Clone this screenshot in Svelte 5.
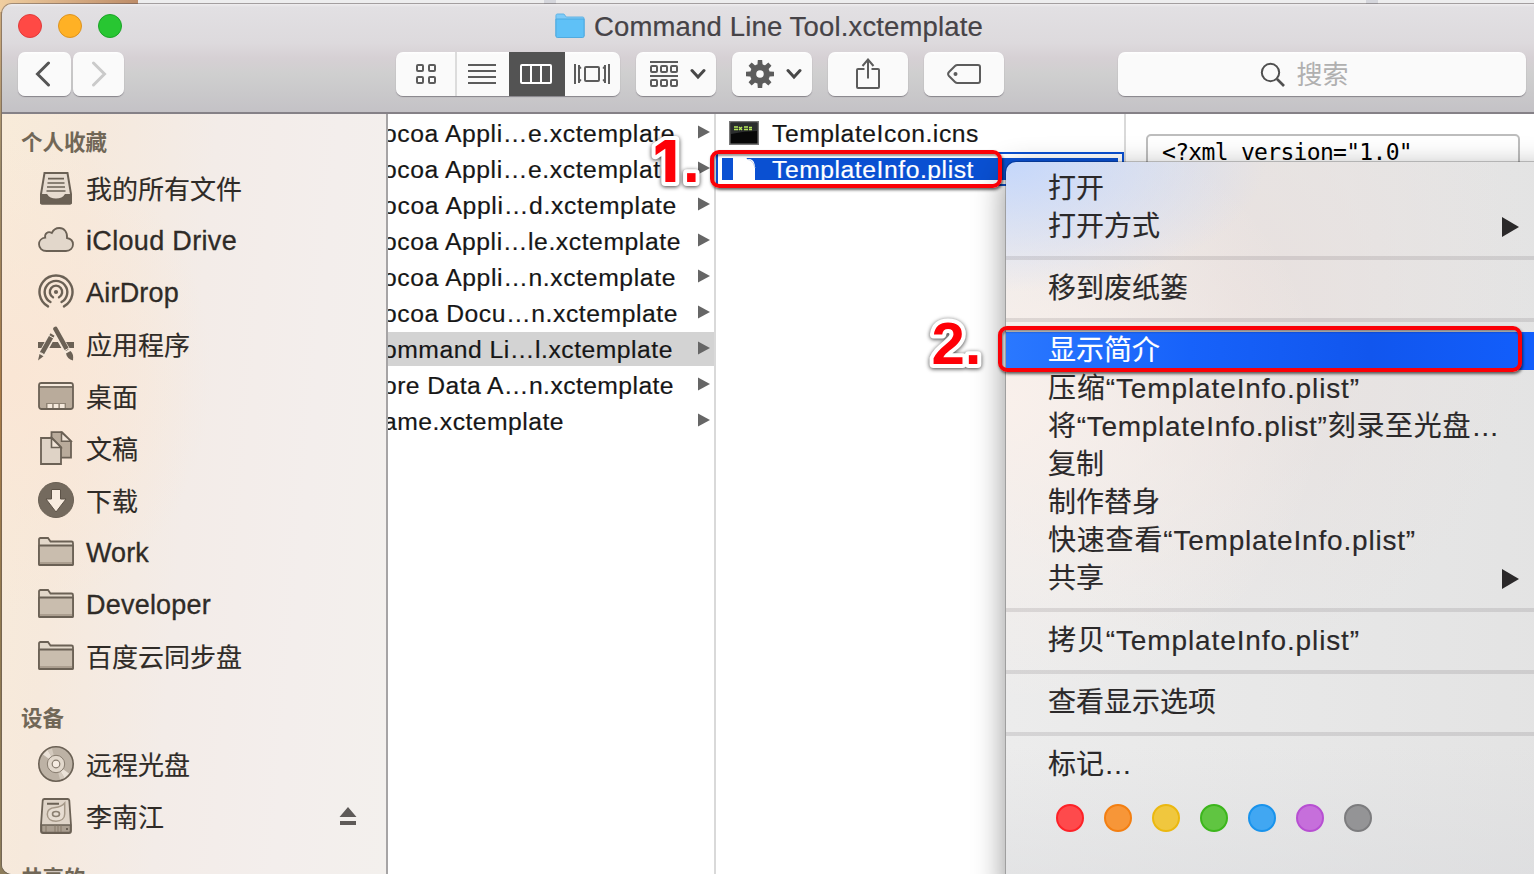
<script>
  const favorites = [
    { icon: 'tray', label: '我的所有文件', width: 156 },
    { icon: 'cloud', label: 'iCloud Drive', width: 151, latin: true },
    { icon: 'airdrop', label: 'AirDrop', width: 93, latin: true },
    { icon: 'apps', label: '应用程序', width: 104 },
    { icon: 'desktop', label: '桌面', width: 52 },
    { icon: 'documents', label: '文稿', width: 52 },
    { icon: 'download', label: '下载', width: 52 },
    { icon: 'folder', label: 'Work', width: 63, latin: true },
    { icon: 'folder', label: 'Developer', width: 125, latin: true },
    { icon: 'folder', label: '百度云同步盘', width: 156 }
  ];
  const devices = [
    { icon: 'disc', label: '远程光盘', width: 104 },
    { icon: 'drive', label: '李南江', width: 78, eject: true }
  ];
  const sections = [
    { title: '个人收藏', items: favorites },
    { title: '设备', items: devices },
    { title: '共享的', items: [] }
  ];

  const templates = [
    { label: 'ocoa Appli…e.xctemplate', width: 292 },
    { label: 'ocoa Appli…e.xctemplate', width: 292 },
    { label: 'ocoa Appli…d.xctemplate', width: 294 },
    { label: 'ocoa Appli…le.xctemplate', width: 298 },
    { label: 'ocoa Appli…n.xctemplate', width: 293 },
    { label: 'ocoa Docu…n.xctemplate', width: 295 },
    { label: 'ommand Li…l.xctemplate', width: 290, selected: true },
    { label: 'ore Data A…n.xctemplate', width: 291 },
    { label: 'ame.xctemplate', width: 181 }
  ];

  const menu = [
    { label: '打开', width: 56 },
    { label: '打开方式', width: 112, submenu: true },
    { separator: true },
    { label: '移到废纸篓', width: 140 },
    { separator: true },
    { label: '显示简介', width: 112, active: true },
    { label: '压缩“TemplateInfo.plist”', width: 312 },
    { label: '将“TemplateInfo.plist”刻录至光盘…', width: 452 },
    { label: '复制', width: 56 },
    { label: '制作替身', width: 112 },
    { label: '快速查看“TemplateInfo.plist”', width: 368 },
    { label: '共享', width: 56, submenu: true },
    { separator: true },
    { label: '拷贝“TemplateInfo.plist”', width: 312 },
    { separator: true },
    { label: '查看显示选项', width: 168 },
    { separator: true },
    { label: '标记…', width: 84 }
  ];

  const tags = [
    ['#fe4a4c', '#fd2228'],
    ['#f79638', '#f37f12'],
    ['#f0c73e', '#ebb810'],
    ['#60c541', '#3cb61c'],
    ['#41a7f2', '#1993ec'],
    ['#c66fdb', '#b74fd2'],
    ['#949496', '#7c7c7e']
  ];

  // Tracks a label out or in until it fills its nominal width.
  function track(node, width) {
    const natural = node.getBoundingClientRect().width;
    const count = [...node.textContent].length;
    node.style.letterSpacing = `${(width - natural) / count}px`;
  }
</script>

{#snippet icon(name)}
  <svg class="icon" viewBox="0 0 36 36" width="36" height="36" fill="none" stroke="#6b6155" stroke-width="2">
    {#if name === 'tray'}
      <path d="M6.500 3h23l3.500 21v8.500q0 1-1 1H4q-1 0-1-1V24z" fill="#e7dcd0" />
      <path d="M3 25h5.500q2.500 4.500 9.500 4.500t9.500-4.500H33v7.500q0 1-1 1H4q-1 0-1-1z" fill="#6b6155" />
      <path d="M10 8.700h16M9.500 13h17M9 17h18M8.500 21h19" stroke-width="1.700" />
    {:else if name === 'cloud'}
      <path d="M8.500 29C4 29 1 26 1 22.300c0-3.500 2.500-6.300 6.200-6.600C6.300 11.500 10 8.800 13.800 11 15.500 7.500 18.300 6 21.300 6c4.800 0 8.300 4 7.700 10 3.600.6 6 3.200 6 6.500 0 3.700-3 6.500-7 6.500z" fill="#e2d7cb" stroke-width="1.800" />
    {:else if name === 'airdrop'}
      <g stroke-width="2.400" stroke-linecap="round">
        <path d="M10 32.400a16.500 16.500 0 1 1 16 0" />
        <path d="M12.500 28a11.300 11.300 0 1 1 11 0" />
        <path d="M15 23.300a6.200 6.200 0 1 1 6 0" />
      </g>
      <circle cx="18" cy="18" r="2.100" fill="#6b6155" stroke="none" />
    {:else if name === 'apps'}
      <path d="M0 19h36" stroke-width="6" />
      <path d="M14.500 9 3.500 29M17 4l14.500 25" stroke="#f6e9db" stroke-width="7" />
      <path d="M14.500 8.500 3.800 27.500" stroke-width="4.600" />
      <path d="M17.500 3 28.300 22.300" stroke-width="4.600" stroke-linecap="round" />
      <path d="m1.500 28 4 2.300L0 34.500z" fill="#6b6155" stroke="none" />
      <path d="m28 27.500 4.500-2.500q3.500 3 2.500 9.500-6-1.500-7-7z" fill="#6b6155" stroke="none" />
      <path d="m11 9.500 5.500 3.200M2.500 26.500l4.500 2.700M26 25l5-3" stroke="#f6e9db" stroke-width="1" />
    {:else if name === 'desktop'}
      <rect x="1" y="5" width="34" height="26" rx="2.500" fill="#b9ab9b" stroke-width="1.800" />
      <path d="M2 8V7q0-1 1.500-1h29Q34 6 34 7v1z" fill="#f5e9dc" stroke="none" />
      <path d="M1 9h34" stroke-width="1.600" />
      <path d="M8 25h20v5H8z" fill="#8f8374" stroke="none" />
      <path d="M9.500 26h4.700v4H9.500zm6.200 0h4.700v4h-4.700zm6.200 0h4.700v4h-4.700z" fill="#f5e9dc" stroke="none" />
    {:else if name === 'documents'}
      <path d="M13.500 2.200H24l9 9v16.500H13.500z" fill="#b9ab9b" stroke-width="1.800" />
      <path d="M23.500 2.500v8.700H33z" fill="#f1e4d7" stroke-width="1.500" />
      <path d="M3 8h11l9 9v17H3z" fill="#dfd3c6" stroke-width="1.800" />
      <path d="M13.500 8v9.500H23z" fill="#f1e4d7" stroke-width="1.600" />
    {:else if name === 'download'}
      <circle cx="18" cy="18" r="17.500" fill="#746a5e" stroke-width="1" />
      <path d="M13.500 7.500h9V17h5.500L18 30 8 17h5.500z" fill="#f8ece0" stroke="#5c5247" stroke-width="1" />
    {:else if name === 'folder'}
      <path d="M1 30V5.500Q1 4 2.500 4H10l2.500 3.500h21q1.500 0 1.500 1.500v21q0 1-1 1H2q-1 0-1-1z" fill="#e3d8ca" stroke-width="1.800" />
      <path d="M1 12.500q0-1 1-1h32q1 0 1 1V30q0 1-1 1H2q-1 0-1-1z" fill="#c9bdae" stroke-width="1.800" />
      <path d="M2 29h32" stroke="#ab9e8f" />
    {:else if name === 'disc'}
      <circle cx="18" cy="18" r="17.200" fill="#bdb2a5" stroke-width="1.600" />
      <path d="M18 18 5 8.500 9.500 4zM18 18l13 9.500-4.500 4.500z" fill="#ebe2d8" stroke="none" />
      <path d="M18 18 9.500 4 14 2.500zM18 18l8.500 14-4.500 1.500z" fill="#d4cabe" stroke="none" />
      <circle cx="18" cy="18" r="8.700" fill="#e2d8cc" stroke="#877c6f" stroke-width="1" />
      <circle cx="18" cy="18" r="3.800" fill="#f6ece2" stroke="#877c6f" stroke-width="1.200" />
    {:else if name === 'drive'}
      <path d="M6.500 1h23q1.500 0 1.800 1.500L33 27v6q0 2-2 2H5q-2 0-2-2v-6L4.700 2.500Q5 1 6.500 1z" fill="#dfd4c8" stroke-width="1.800" />
      <path d="M3.500 27h29v6q0 1.500-1.500 1.500H5q-1.500 0-1.500-1.500z" fill="#aa9e90" stroke-width="1.500" />
      <path d="M9 5.700h12" stroke-width="1.900" />
      <path d="M26.700 5v11c0 4.500-3.500 7.200-8.700 7.200s-8.700-2.700-8.700-7 3.700-6.400 8-6.700C21.500 9.200 24.500 7.500 26.700 5z" fill="#e7ddd2" stroke="#a59888" stroke-width="1.500" />
      <ellipse cx="18" cy="16" rx="3.500" ry="2.500" stroke="#8c8072" stroke-width="1.600" />
      <path d="M8 27v7M17 27v7M20 27v7M23 27v7" stroke="#857969" stroke-width="1" />
      <circle cx="29" cy="31" r="1.100" fill="#5c5247" stroke="none" />
    {/if}
  </svg>
{/snippet}

{#snippet chevron()}
  <svg width="16" height="12" viewBox="0 0 16 12"><path d="m2 2.500 6 6.500 6-6.500" fill="none" stroke="#484848" stroke-width="3" stroke-linecap="round" /></svg>
{/snippet}

<div class="screen">
  <div class="backdrop"><i></i><b></b><b class="far"></b></div>
  <div class="window">
    <header>
      <div class="titlebar">
        <div class="lights"><i class="close"></i><i class="min"></i><i class="max"></i></div>
        <div class="title">
          <svg width="30" height="26" viewBox="0 0 32 26" preserveAspectRatio="none">
            <path d="M1 23V2.500Q1 1 2.500 1h7L12 4h17.500Q31 4 31 5.500V23z" fill="#7ecbf8" stroke="#5fb3e4" />
            <path d="M1 6h30v17q0 1.500-1.500 1.500h-27Q1 24.500 1 23z" fill="#5fc1f7" stroke="#4ea9de" />
          </svg>
          <span use:track={389}>Command Line Tool.xctemplate</span>
        </div>
      </div>
      <div class="tools">
        <button class="back" aria-label="Back"><svg width="16" height="26" viewBox="0 0 16 26"><path d="M13.500 2 2.500 13l11 11" fill="none" stroke="#555" stroke-width="3" stroke-linecap="round" /></svg></button>
        <button class="forward" aria-label="Forward"><svg width="16" height="26" viewBox="0 0 16 26"><path d="m2.500 2 11 11-11 11" fill="none" stroke="#cacaca" stroke-width="3" stroke-linecap="round" /></svg></button>
        <div class="views">
          <button class="grid" aria-label="Icons">
            <svg width="20" height="20" viewBox="0 0 20 20" fill="none" stroke="#5c5c5c" stroke-width="2"><rect x="1" y="1" width="6" height="6" rx="1" /><rect x="13" y="1" width="6" height="6" rx="1" /><rect x="1" y="13" width="6" height="6" rx="1" /><rect x="13" y="13" width="6" height="6" rx="1" /></svg>
          </button>
          <button class="list" aria-label="List">
            <svg width="28" height="20" viewBox="0 0 28 20"><path d="M0 1h28M0 7h28M0 13h28M0 19h28" stroke="#5c5c5c" stroke-width="2" /></svg>
          </button>
          <button class="columns" aria-label="Columns">
            <svg width="32" height="20" viewBox="0 0 32 20" fill="none" stroke="#fff" stroke-width="2"><rect x="1" y="1" width="30" height="18" rx="1" /><path d="M11 1v18M21 1v18" /></svg>
          </button>
          <button class="flow" aria-label="Cover Flow">
            <svg width="36" height="20" viewBox="0 0 36 20" fill="none" stroke="#5c5c5c" stroke-width="2"><rect x="11" y="3" width="14" height="14" rx="1" /><path d="M1 0v20M35 0v20M5 1v18M31 1v18" /><path d="m5 2 2 2.500M5 18l2-2.500M31 2l-2 2.500M31 18l-2-2.500" stroke-width="1.500" /></svg>
          </button>
        </div>
        <button class="wide" aria-label="Arrange">
          <svg width="28" height="26" viewBox="0 0 28 26" fill="none" stroke="#5c5c5c" stroke-width="2"><path d="M0 1h28M0 15h28" /><rect x="1" y="5" width="6" height="6" rx="1" /><rect x="11" y="5" width="6" height="6" rx="1" /><rect x="21" y="5" width="6" height="6" rx="1" /><rect x="1" y="19" width="6" height="6" rx="1" /><rect x="11" y="19" width="6" height="6" rx="1" /><rect x="21" y="19" width="6" height="6" rx="1" /></svg>
          {@render chevron()}
        </button>
        <button class="wide" aria-label="Action">
          <svg width="28" height="28" viewBox="-14 -14 28 28">
            {#each [0, 45, 90, 135] as angle}
              <path d="M-3.200 0-2.200-14h4.400l1 14-1 14h-4.400z" fill="#5c5c5c" transform="rotate({angle})" />
            {/each}
            <circle r="7" fill="none" stroke="#5c5c5c" stroke-width="6" /><circle r="3.800" fill="#fafafa" />
          </svg>
          {@render chevron()}
        </button>
        <button class="plain" aria-label="Share">
          <svg width="24" height="32" viewBox="0 0 24 32" fill="none" stroke="#5c5c5c" stroke-width="2"><path d="M8.500 11H2q-1 0-1 1v17q0 1 1 1h20q1 0 1-1V12q0-1-1-1h-6.500M12 20.500V2M6.500 8 12 1.500 17.500 8" /></svg>
        </button>
        <button class="plain" aria-label="Tags">
          <svg width="34" height="20" viewBox="0 0 34 20"><path d="M10.500 1H31q2 0 2 2v14q0 2-2 2H10.500Q9 19 8 18L2 12q-1.800-2 0-4l6-6Q9 1 10.500 1z" fill="none" stroke="#5c5c5c" stroke-width="2" /><circle cx="8.500" cy="10" r="2" fill="#5c5c5c" /></svg>
        </button>
        <div class="search">
          <svg width="26" height="26" viewBox="0 0 26 26" fill="none" stroke="#505050"><circle cx="10.500" cy="10.500" r="8.700" stroke-width="2" /><path d="m17 17 7 7" stroke-width="2.600" /></svg>
          <span>搜索</span>
        </div>
      </div>
    </header>

    <main>
      <aside>
        {#each sections as section}
          <h2>{section.title}</h2>
          {#each section.items as item}
            <div class="place" class:latin={item.latin}>
              {@render icon(item.icon)}
              <span use:track={item.width}>{item.label}</span>
              {#if item.eject}
                <svg class="eject" width="18" height="18" viewBox="0 0 18 18" fill="#5e5a58"><path d="m9 0 8.500 10H.5zM1 14h16v4H1z" /></svg>
              {/if}
            </div>
          {/each}
        {/each}
      </aside>

      <section class="column templates">
        {#each templates as row}
          <div class="row" class:selected={row.selected}>
            <div class="name"><span use:track={row.width}>{row.label}</span></div>
            <svg width="12" height="14" viewBox="0 0 12 14"><path d="M0 .5 12 7 0 13.500z" fill="#666" /></svg>
          </div>
        {/each}
      </section>

      <section class="column files">
        <div class="file">
          <svg width="30" height="24" viewBox="0 0 30 24"><rect x=".75" y=".75" width="28.500" height="22.500" fill="#080808" stroke="#777" stroke-width="1.500" /><path d="M2 2h26v8q-13 0-26 3z" fill="#2b2d2e" /><path d="M5 6h4M5 8.500h4M10 6l3 3M13 6l-3 3M15 6h4M15 8.500h4M20 6.500h3M20 8.500h3" stroke="#b6e85c" stroke-width="1.400" /></svg>
          <span use:track={207}>TemplateIcon.icns</span>
        </div>
        <div class="file chosen">
          <div class="fill">
            <svg width="24" height="22" viewBox="0 0 24 22"><path d="M0 0h13v1h4q5 1 5 9v12H0z" fill="#fff" /><path d="M13 0q1 2 4 2 4 2 5 8" fill="none" stroke="#c9d3e6" /></svg>
            <span use:track={202}>TemplateInfo.plist</span>
          </div>
        </div>
      </section>

      <section class="column preview">
        <pre><span use:track={250}>{'<?xml version="1.0"'}</span></pre>
      </section>
    </main>
  </div>

  <nav class="menu">
    {#each menu as item}
      {#if item.separator}
        <hr />
      {:else}
        <div class="item" class:active={item.active}>
          <span use:track={item.width}>{item.label}</span>
          {#if item.submenu}
            <svg width="18" height="20" viewBox="0 0 18 20"><path d="M0 0v20l17-10z" fill="#2b292a" /></svg>
          {/if}
        </div>
      {/if}
    {/each}
    <div class="tags">
      {#each tags as [fill, edge]}
        <i style="background:{fill};border-color:{edge}"></i>
      {/each}
    </div>
  </nav>

  <div class="frame first"></div>
  <div class="frame second"></div>
  <svg class="step one" width="76" height="70" viewBox="0 0 76 70"><text x="10" y="55"><tspan class="numeral">1</tspan><tspan x="40">.</tspan></text></svg>
  <svg class="step two" width="76" height="70" viewBox="0 0 76 70"><text x="10.500" y="55">2.</text></svg>
</div>

<style>
  :global(body) { margin: 0; overflow: hidden; }
  .screen {
    position: relative; width: 1534px; height: 874px; overflow: hidden;
    font-family: "Liberation Sans", "Noto Sans CJK SC", sans-serif;
    background: linear-gradient(#d0ab7b, #9b8a68 20%, #a87a45 45%, #927a50 70%, #8d7d5b);
    box-sizing: border-box; padding: 4px 0 0 2px;
  }
  svg { display: block; flex: none; }
  .backdrop { position: absolute; inset: 0 0 auto; height: 12px; display: flex; background: linear-gradient(90deg, #f0cea0, #bd8c68 138px, #ededee 138px); }
  .backdrop i { width: 544px; }
  .backdrop b { width: 12px; background: #d5d6dc; }
  .backdrop .far { margin-left: 810px; }
  .window { position: relative; height: 870px; display: flex; flex-direction: column; border-radius: 10px 0 0 10px; overflow: hidden; box-shadow: 0 0 0 1px rgba(90, 80, 80, .5); }
  header { flex: none; height: 110px; box-sizing: border-box; border-bottom: 2px solid #858187; background: linear-gradient(#efedef, #e2e0e3 3px, #dddadd 36%, #d6d0d4 50%, #cfcfcf 65%, #c4c2c6); }
  .titlebar { height: 44px; display: grid; grid-template-columns: 553px 1fr; align-items: center; }
  .lights { display: flex; gap: 16px; padding-left: 16px; }
  .lights i { width: 24px; height: 24px; box-sizing: border-box; border-radius: 50%; border: 1px solid; }
  .close { background: #ff4945; border-color: #df3b3b !important; }
  .min { background: #ffb125; border-color: #dc9320 !important; }
  .max { background: #28c632; border-color: #1ba327 !important; }
  .title { display: flex; align-items: center; gap: 9px; font-size: 27.500px; line-height: 32px; color: #464347; white-space: nowrap; -webkit-text-stroke: .2px; }
  .title span { padding-top: 2px; }
  .tools { display: flex; margin-top: 4px; padding-left: 16px; height: 44px; }
  button, .search { height: 44px; border: 0; padding: 0; margin: 0; border-radius: 7px; background: linear-gradient(#fff, #fafafa 3px); box-shadow: 0 1px 1px rgba(90, 85, 95, .6); display: flex; align-items: center; justify-content: center; box-sizing: border-box; }
  .back { width: 53px; padding-right: 3px; }
  .forward { width: 51px; margin-left: 2px; }
  .views { display: flex; margin-left: 272px; width: 224px; border-radius: 7px; overflow: hidden; box-shadow: 0 1px 1px rgba(90, 85, 95, .6); }
  .views button { border-radius: 0; box-shadow: none; }
  .views .grid { width: 61px; border-right: 2px solid #dcdcdc; padding-left: 1px; }
  .list { width: 52px; padding-right: 2px; }
  .views .columns { width: 56px; background: #535353; padding-right: 2px; }
  .views .flow { width: 55px; padding-right: 2px; }
  .wide { width: 80px; margin-left: 16px; gap: 12px; justify-content: flex-start; padding-left: 14px; }
  .plain { width: 80px; margin-left: 16px; }
  .search { width: 408px; margin-left: 114px; gap: 10px; padding-right: 35px; font-size: 26px; color: #b0b0b0; line-height: 36px; }
  .search span { padding-top: 2px; }
  .search svg { margin-top: 2px; }
  main { flex: 1; display: flex; min-height: 0; background: #fff; }
  aside { width: 384px; flex: none; border-right: 2px solid #a6a4a5; padding-top: 8px; overflow: hidden; background: radial-gradient(ellipse 200px 240px at 10px 260px, #fae6d5, #fae6d500), linear-gradient(95deg, #f8ebd9, #f6e9dc 20%, #f3ece8 48%, #f3eeec 75%, #f3f0ed); }
  h2 { margin: 16px 0 0; padding: 1px 0 0 19px; height: 40px; box-sizing: border-box; line-height: 40px; font-size: 21.500px; font-weight: 700; color: #716757; white-space: nowrap; }
  h2:first-child { margin-top: 0; }
  .place { height: 52px; display: flex; align-items: center; padding-left: 36px; gap: 12px; font-size: 26px; color: #2f2b27; line-height: 36px; white-space: nowrap; -webkit-text-stroke: .15px; }
  .place span { padding-top: 3px; }
  .place.latin { font-size: 27px; -webkit-text-stroke: .3px; }
  .place.latin span { padding-top: 1px; }
  .eject { margin-left: auto; margin-right: 29px; }
  .column { flex: none; box-sizing: border-box; overflow: hidden; border-right: 2px solid #d9d9d9; font-size: 24.700px; color: #161616; white-space: nowrap; }
  .templates { width: 328px; padding-top: 2px; display: flex; flex-direction: column; gap: 2px; }
  .row { height: 34px; display: flex; align-items: center; justify-content: space-between; padding-right: 4px; line-height: 34px; }
  .row svg { margin-top: -2px; }
  .row.selected { background: #d3d3d3; }
  .name { margin-left: -5px; padding-top: 1px; -webkit-text-stroke: .2px; }
  .files { width: 410px; }
  .file { height: 38px; display: flex; align-items: center; gap: 13px; padding-left: 13px; -webkit-text-stroke: .2px; }
  .file > span { padding-top: 2px; }
  .chosen { height: 34px; box-sizing: border-box; border: 2px solid #0a50d2; padding: 4px; }
  .fill { flex: 1; height: 22px; background: #0a50d2; color: #fff; display: flex; align-items: center; padding-left: 11px; gap: 15px; overflow: hidden; }
  .fill span { line-height: 24px; padding-top: 2px; }
  .preview { flex: 1; border: 0; padding: 20px 14px 0 20px; }
  pre { margin: 0; height: 200px; border: 2px solid #bdbdbd; border-radius: 5px; padding: 2px 14px; font: 23px/28px "DejaVu Sans Mono", monospace; color: #000; }
  .menu { position: absolute; left: 1006px; top: 162px; width: 560px; height: 730px; box-sizing: border-box; padding-top: 8px; border-radius: 10px 0 0 0; box-shadow: 0 0 0 1px rgba(0, 0, 0, .2), 0 10px 32px rgba(0, 0, 0, .45);
    background: radial-gradient(ellipse 260px 130px at 0 0, #c5d7fb, #c5d7fb00), radial-gradient(ellipse 320px 300px at 0 240px, #f9f0eb, #f6eeea00), radial-gradient(ellipse 300px 350px at 230px 140px, #e8e0de, #e8e0de00), linear-gradient(#0000 80%, #d8d9dc80), linear-gradient(90deg, #ececec, #e3e3e3); color: #2b292a; font-size: 28px; }
  .item { height: 38px; line-height: 38px; display: flex; align-items: center; justify-content: space-between; padding: 0 46px 0 42px; white-space: nowrap; -webkit-text-stroke: .15px; }
  .item svg { margin-top: -1px; }
  .item.active { background: linear-gradient(90deg, #2a78ff, #1762fa 33%, #1156ee 65%, #1260ff); color: #fff; }
  hr { height: 4px; border: 0; margin: 10px 0; background: rgba(60, 55, 60, .13); }
  .tags { display: flex; gap: 20px; padding: 20px 0 0 50px; }
  .tags i { width: 28px; height: 28px; box-sizing: border-box; border: 2px solid; border-radius: 50%; }
  .frame { position: absolute; box-sizing: border-box; border: 4px solid #fb0007; border-radius: 9px; box-shadow: 1px 2px 3px rgba(0, 0, 0, .6), inset 1px 2px 2px rgba(0, 0, 0, .4); }
  .first { left: 710px; top: 150px; width: 292px; height: 38px; }
  .second { left: 998px; top: 326px; width: 524px; height: 46px; }
  .step { position: absolute; filter: drop-shadow(0 1px 2px rgba(0, 0, 0, .75)); font: 700 60px "Liberation Sans", sans-serif; fill: #fe0007; stroke: #fff; stroke-width: 8px; stroke-linejoin: round; paint-order: stroke fill; }
  .numeral { font: 800 58px "Inter", "Liberation Sans", sans-serif; }
  .one { left: 643px; top: 127px; }
  .two { left: 921px; top: 309px; }
</style>
